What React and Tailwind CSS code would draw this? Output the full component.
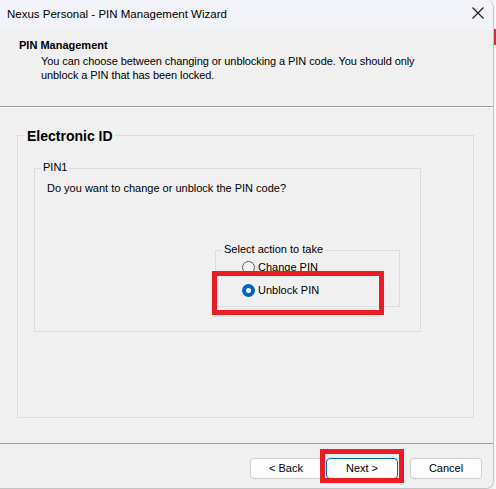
import React from 'react';

const font = "font-['Liberation_Sans',Arial,sans-serif]";

function Group({ label, className, labelClass, children }) {
  return (
    <div className={`relative border border-[#dcdcdc] ${className}`}>
      <span className={`absolute bg-[#f0f0f0] px-[2px] whitespace-nowrap ${labelClass}`}>{label}</span>
      {children}
    </div>
  );
}

function Radio({ checked, label }) {
  return (
    <div className="flex items-center h-[13px] gap-[3px]">
      {checked ? (
        <span className="w-[13px] h-[13px] rounded-full bg-[#0067c0] flex items-center justify-center">
          <span className="w-[5px] h-[5px] rounded-full bg-white"></span>
        </span>
      ) : (
        <span className="w-[13px] h-[13px] rounded-full border border-[#5c5c5c] bg-[#f7f7f7]"></span>
      )}
      <span className="leading-[13px]">{label}</span>
    </div>
  );
}

function Button({ children, primary }) {
  return (
    <button
      type="button"
      className={`block w-[72px] h-[21px] rounded-[4px] bg-[#fdfdfd] text-[11px] leading-[13px] text-black border ${primary ? 'border-[#0067c0]' : 'border-[#d0d0d0]'}`}
    >
      {children}
    </button>
  );
}

export default function App() {
  return (
    <div className={`flex w-[496px] h-[489px] bg-[#f0f0f0] text-black ${font}`}>
      <div className="w-[494px] h-[489px] flex flex-col border-r border-b border-[#c4c4c4] rounded-tr-[8px] rounded-br-[8px] overflow-hidden">
        {/* title bar */}
        <div className="h-[29px] shrink-0 bg-[#f2f3f8] flex items-center justify-between pl-[7px] pr-[9px]">
          <span className="text-[11.5px] leading-[14px] mt-[-2px]">Nexus Personal - PIN Management Wizard</span>
          <svg width="12" height="12" viewBox="0 0 12 12" className="mt-[-3px]">
            <path d="M0.5 0.5 L11.5 11.5 M11.5 0.5 L0.5 11.5" stroke="#1a1a1a" strokeWidth="1.1" />
          </svg>
        </div>

        {/* header */}
        <div className="h-[77px] shrink-0 pt-[10px] pl-[19px] text-[11px]">
          <div className="font-bold leading-[13px]">PIN Management</div>
          <div className="pl-[22px] mt-[2px] leading-[14px] tracking-[-0.08px]">
            You can choose between changing or unblocking a PIN code. You should only
            <br />
            unblock a PIN that has been locked.
          </div>
        </div>
        <div className="h-[2px] shrink-0 border-t border-[#a0a0a0] border-b border-b-white"></div>

        {/* body */}
        <div className="h-[335px] shrink-0 pt-[27px] pl-[17px] text-[11px]">
          <Group
            label="Electronic ID"
            className="w-[457px] h-[283px] pt-[32px] pl-[16px]"
            labelClass="-top-[8px] left-[7px] text-[14px] leading-[16px] font-bold"
          >
            <Group
              label="PIN1"
              className="w-[387px] h-[164px] pt-[13px] pl-[12px]"
              labelClass="-top-[8px] left-[6px] leading-[13px]"
            >
              <div className="leading-[13px]">Do you want to change or unblock the PIN code?</div>
              <Group
                label="Select action to take"
                className="ml-[168px] mt-[55px] w-[185px] h-[57px] pt-[10px] pl-[26px] flex flex-col gap-[10px]"
                labelClass="-top-[8px] left-[6px] leading-[13px]"
              >
                <Radio label="Change PIN" />
                <Radio checked label="Unblock PIN" />
                <div className="absolute left-[-4px] top-[20px] w-[172px] h-[44px] border-[5px] border-[#ed1c24]"></div>
              </Group>
            </Group>
          </Group>
        </div>

        {/* footer */}
        <div className="h-[1px] shrink-0 bg-[#a0a0a0]"></div>
        <div className="flex-1 flex justify-end items-start pt-[14px] pr-[11px]">
          <Button>&lt; Back</Button>
          <div className="relative ml-[4px] flex">
            <Button primary>Next &gt;</Button>
            <div className="absolute left-[-6px] top-[-9px] w-[84px] h-[34px] border-[5px] border-[#ed1c24]"></div>
          </div>
          <div className="ml-[12px] flex">
            <Button>Cancel</Button>
          </div>
        </div>
      </div>

      {/* edge of window behind */}
      <div className="w-[2px] flex flex-col bg-[#f7f7f7]">
        <div className="h-[29px]"></div>
        <div className="h-[16px] bg-[#c4314b]"></div>
      </div>
    </div>
  );
}
